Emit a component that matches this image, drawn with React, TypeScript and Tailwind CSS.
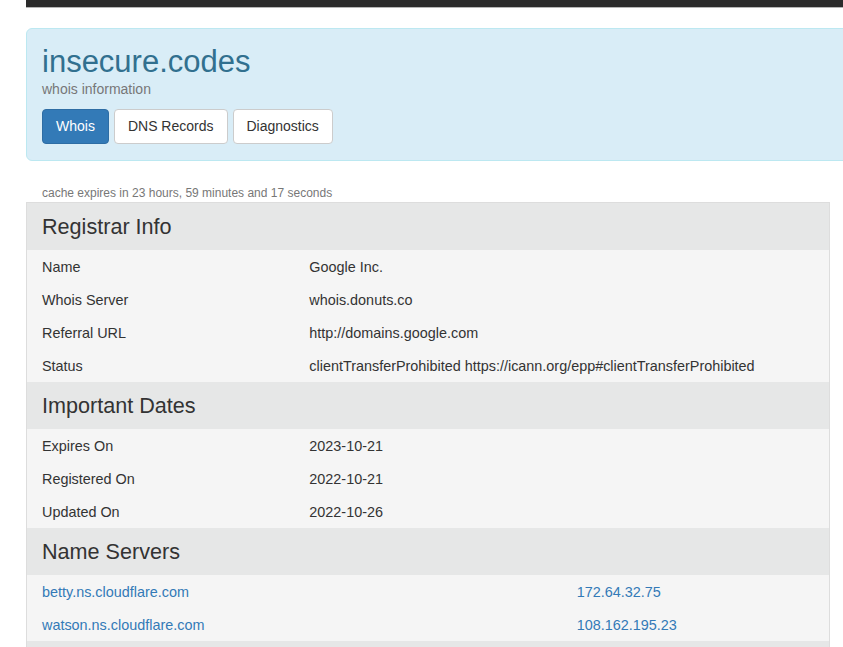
import React from 'react';

type Row = { label: string; value: string };

const registrar: Row[] = [
  { label: 'Name', value: 'Google Inc.' },
  { label: 'Whois Server', value: 'whois.donuts.co' },
  { label: 'Referral URL', value: 'http://domains.google.com' },
  { label: 'Status', value: 'clientTransferProhibited https://icann.org/epp#clientTransferProhibited' },
];

const dates: Row[] = [
  { label: 'Expires On', value: '2023-10-21' },
  { label: 'Registered On', value: '2022-10-21' },
  { label: 'Updated On', value: '2022-10-26' },
];

const nameServers: Row[] = [
  { label: 'betty.ns.cloudflare.com', value: '172.64.32.75' },
  { label: 'watson.ns.cloudflare.com', value: '108.162.195.23' },
];

const SectionHeading: React.FC<{ title: string }> = ({ title }) => (
  <div className="h-[47px] bg-[#e6e7e7] px-[15px] text-[21.6px] leading-[47px] text-[#333]">{title}</div>
);

const InfoRow: React.FC<{ row: Row }> = ({ row }) => (
  <div className="grid h-[33px] grid-cols-3 items-center bg-[#f5f5f5] text-[14.4px] leading-[20px] text-[#333]">
    <div className="px-[15px]">{row.label}</div>
    <div className="col-span-2 whitespace-nowrap px-[15px]">{row.value}</div>
  </div>
);

const ServerRow: React.FC<{ row: Row }> = ({ row }) => (
  <div className="grid h-[33px] grid-cols-3 items-center bg-[#f5f5f5] text-[14.4px] leading-[20px]">
    <a href="#" className="col-span-2 px-[15px] text-[#337ab7]">{row.label}</a>
    <a href="#" className="px-[15px] text-[#337ab7]">{row.value}</a>
  </div>
);

export default function App() {
  return (
    <div
      className="min-h-screen w-full overflow-hidden bg-white pl-[26px]"
      style={{ fontFamily: '"Liberation Sans", Arial, sans-serif' }}
    >
      {/* navbar bottom edge */}
      <div className="h-[8px] w-[840px] border-b border-[#b5b5b5] bg-[#2b2b2b]" />

      {/* header */}
      <div className="mt-[20px] w-[840px] rounded-[6px] border border-[#bce8f1] bg-[#d9edf7] px-[15px] pb-[16px] pt-[16px]">
        <h1 className="text-[31px] leading-[34px] text-[#31708f]">insecure.codes</h1>
        <p className="text-[14px] leading-[20px] text-[#777]">whois information</p>
        <div className="mt-[10px] flex gap-[5px]">
          <button className="h-[35px] rounded-[4px] border border-[#2e6da4] bg-[#337ab7] px-[13px] text-[14px] text-white">
            Whois
          </button>
          <button className="h-[35px] rounded-[4px] border border-[#ccc] bg-white px-[13px] text-[14px] text-[#333]">
            DNS Records
          </button>
          <button className="h-[35px] rounded-[4px] border border-[#ccc] bg-white px-[13px] text-[14px] text-[#333]">
            Diagnostics
          </button>
        </div>
      </div>

      <p className="mt-[25px] pl-[16px] text-[12px] leading-[15px] text-[#777]">
        cache expires in 23 hours, 59 minutes and 17 seconds
      </p>

      {/* whois table */}
      <div className="mt-[1px] w-[804px] border border-[#ddd]">
        <SectionHeading title="Registrar Info" />
        {registrar.map((r) => (
          <InfoRow key={r.label} row={r} />
        ))}
        <SectionHeading title="Important Dates" />
        {dates.map((r) => (
          <InfoRow key={r.label} row={r} />
        ))}
        <SectionHeading title="Name Servers" />
        {nameServers.map((r) => (
          <ServerRow key={r.label} row={r} />
        ))}
        <div className="h-[47px] bg-[#e6e7e7]" />
      </div>
    </div>
  );
}
